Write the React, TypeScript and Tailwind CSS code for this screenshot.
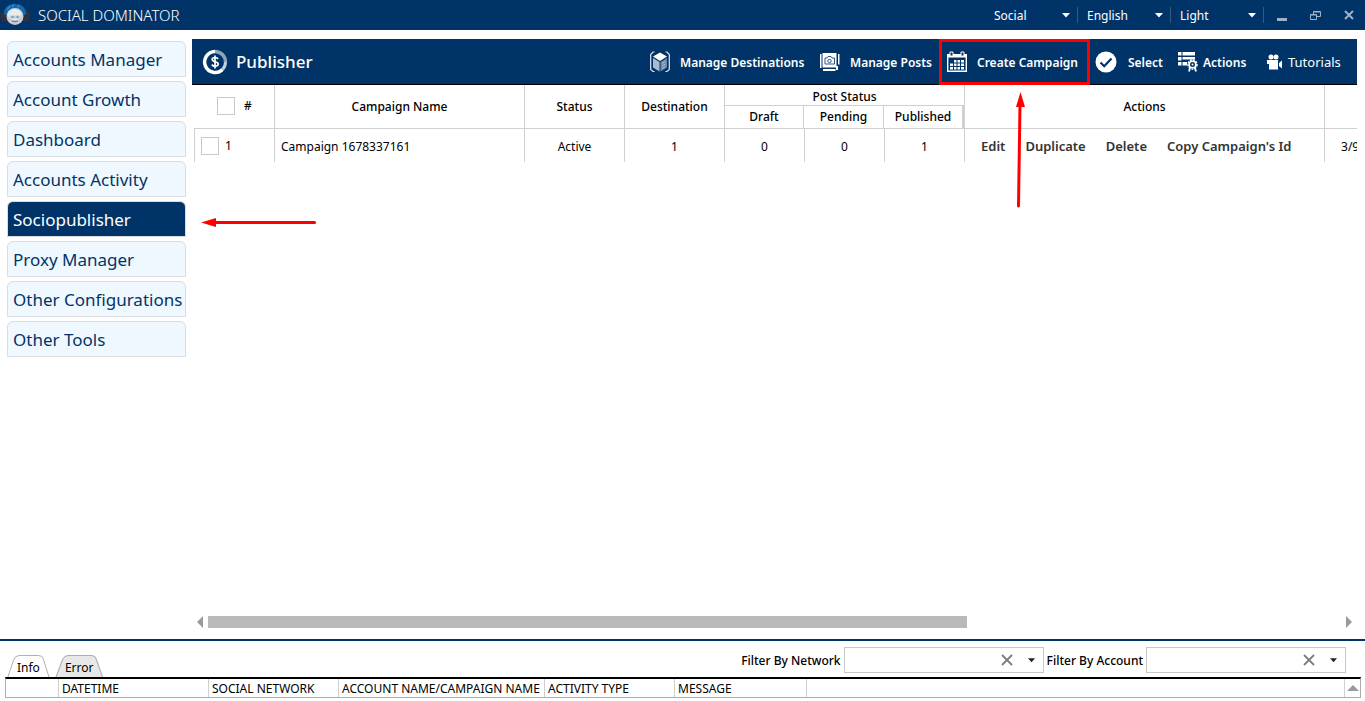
import { useState } from 'react';
import type { ReactNode } from 'react';
import clsx from 'clsx';

const MENU = [
  'Accounts Manager',
  'Account Growth',
  'Dashboard',
  'Accounts Activity',
  'Sociopublisher',
  'Proxy Manager',
  'Other Configurations',
  'Other Tools',
];

const ROW_ACTIONS = ['Edit', 'Duplicate', 'Delete', "Copy Campaign's Id"];

const CAMPAIGNS = [
  { id: 1, name: 'Campaign 1678337161', status: 'Active', destination: 1, draft: 0, pending: 0, published: 1, created: '3/9' },
];

const LOG_COLUMNS = [
  { label: '', width: 'w-[53px]' },
  { label: 'DATETIME', width: 'w-[150px]' },
  { label: 'SOCIAL NETWORK', width: 'w-[130px]' },
  { label: 'ACCOUNT NAME/CAMPAIGN NAME', width: 'w-[206px]' },
  { label: 'ACTIVITY TYPE', width: 'w-[130px]' },
  { label: 'MESSAGE', width: 'w-[132px]' },
];

function Logo() {
  return (
    <svg width="30" height="24" viewBox="0 0 30 24" aria-hidden="true">
      <ellipse cx="4" cy="13" rx="4" ry="6" fill="#2c3140" />
      <ellipse cx="26" cy="13" rx="4" ry="6" fill="#2c3140" />
      <path d="M4 11C4 4 9 1 15 1s11 3 11 10l-3 2H7z" fill="#1268b3" />
      <path d="M7 7l3-4M12 4l2-3M18 4l1-2" stroke="#3f9be0" strokeWidth="1" />
      <circle cx="15" cy="13.500" r="8.500" fill="#c9cbd2" />
      <ellipse cx="14.500" cy="11.500" rx="7" ry="5.500" fill="#e9eaee" />
      <path d="M9.500 12.500h11v3h-11z" fill="#c3d0de" />
      <circle cx="12.500" cy="14" r="1.200" fill="#7f9fbd" />
      <circle cx="17.500" cy="14" r="1.200" fill="#7f9fbd" />
      <path d="M12 18q3 1.500 6 0" stroke="#6f727d" fill="none" />
    </svg>
  );
}

function DollarIcon() {
  return (
    <svg width="26" height="26" viewBox="0 0 26 26" fill="none" aria-hidden="true">
      <path d="M13 2.500a10.500 10.500 0 1 0 7.500 18" stroke="#fff" strokeWidth="3.500" />
      <path d="M13 2.500a10.500 10.500 0 0 1 10.500 10.500" stroke="#8fa5bf" strokeWidth="3.500" />
      <path d="M23.500 13a10.500 10.500 0 0 1-3 7.500" stroke="#c3cfdc" strokeWidth="3" />
      <path d="M16 10c-.5-1-1.600-1.500-2.900-1.500-1.700 0-2.900.8-2.900 2 0 3 6 1.500 6 4.500 0 1.400-1.300 2.200-3.100 2.200-1.500 0-2.600-.5-3.200-1.700M13 6.500v13" stroke="#fff" strokeWidth="1.700" />
    </svg>
  );
}

function BoxIcon() {
  return (
    <svg width="20" height="22" viewBox="0 0 20 22" fill="none" aria-hidden="true">
      <path d="M10 1.500l7 4-7 4.500-7-4.500z" fill="#fff" />
      <path d="M3 7l6.500 4v9.500L3 16.500z" fill="#a9bbcf" />
      <path d="M17 7l-6.500 4v9.500l6.500-4z" fill="#6a87a8" />
      <path d="M12 12.500l3.500-2M12 15l3.500-2M12 17.500l3.500-2" stroke="#c9d4e0" strokeWidth=".8" />
      <path d="M4.500 1H3L.7 3.500v15L3 20.500h1.500M15.500 1H17l2.300 2.500v15L17 20.500h-1.500" stroke="#dfe6ee" strokeWidth="1.200" />
    </svg>
  );
}

function PostsIcon() {
  return (
    <svg width="20" height="20" viewBox="0 0 20 20" fill="none" aria-hidden="true">
      <path d="M0 2h1.500v14H0zM18 2h1.500v10.500H18zM3 17h12.500v2H3zM16 14h2v4h-2z" fill="#fff" />
      <path d="M2.500 1h14v14.500h-14z" fill="#fff" />
      <path d="M5 6h2l1-1.500h3l1 1.500h2.500v6H5z" stroke="#2f5680" strokeWidth="1" />
      <circle cx="9.500" cy="9" r="1.700" stroke="#2f5680" strokeWidth="1" />
    </svg>
  );
}

function CalendarIcon() {
  return (
    <svg width="20" height="21" viewBox="0 0 20 21" fill="none" aria-hidden="true">
      <path d="M.7 3.700h18.600v16.600H.7z" stroke="#fff" strokeWidth="1.400" />
      <path d="M1 3.500h18v3H1z" fill="#fff" />
      <path d="M3 1h3v4H3zM14 1h3v4h-3z" fill="#003468" stroke="#fff" strokeWidth="1" />
      <path
        d="M7 9h2.500v2.500H7zM10.500 9H13v2.500h-2.500zM14 9h3v2.500h-3zM3 12.500h3V15H3zM7 12.500h2.500V15H7zM10.500 12.500H13V15h-2.500zM14 12.500h3V15h-3zM3 16h3v2.500H3zM7 16h2.500v2.500H7zM10.500 16H13v2.500h-2.500zM14 16h3v2.500h-3z"
        fill="#fff"
      />
    </svg>
  );
}

function CheckIcon() {
  return (
    <svg width="22" height="22" viewBox="0 0 22 22" fill="none" aria-hidden="true">
      <circle cx="11" cy="11" r="10.500" fill="#fff" />
      <path d="M5.500 11.500l3.700 3.700 7.300-7.600" stroke="#003468" strokeWidth="2.200" />
    </svg>
  );
}

function ActionsIcon() {
  return (
    <svg width="20" height="21" viewBox="0 0 20 21" fill="none" aria-hidden="true">
      <path d="M0 1h3.500v3.500H0zM4.500 1H17v3.500H4.500zM0 6h3.500v3.500H0zM4.500 6H17v2.500H4.500zM0 11h3.500v3.500H0zM4.500 11H9v3.500H4.500z" fill="#fff" />
      <circle cx="14.500" cy="13.500" r="4.500" stroke="#fff" strokeWidth="1.500" strokeDasharray="2 1" />
      <circle cx="14.500" cy="13.500" r="3.300" stroke="#fff" strokeWidth="1.600" />
      <circle cx="14.500" cy="13.500" r="1" fill="#fff" />
      <path d="M12 17l-1 3.500M17 17l1 3.500" stroke="#fff" strokeWidth="1.800" />
    </svg>
  );
}

function CameraIcon() {
  return (
    <svg width="16" height="16" viewBox="0 0 16 16" fill="#fff" aria-hidden="true">
      <circle cx="4" cy="3" r="2.500" />
      <circle cx="9" cy="3" r="2.500" />
      <path d="M0 6h11v9.500H2V10H0zM12 9l3-2.500v8L12 12z" />
    </svg>
  );
}

function Caret({ className }: { className: string }) {
  return (
    <svg width="8" height="5" viewBox="0 0 8 5" className={clsx('pointer-events-none absolute', className)} aria-hidden="true">
      <path d="M0 0h8L4 4.500z" fill="currentColor" />
    </svg>
  );
}

function TopSelect({ label, value }: { label: string; value: string }) {
  return (
    <div className="relative flex h-4 w-[93px] items-center border-r border-[#33597f] text-white">
      <select aria-label={label} className="w-full appearance-none bg-transparent pt-0.5 pl-[9px] text-xs outline-none">
        <option>{value}</option>
      </select>
      <Caret className="right-[7px]" />
    </div>
  );
}

function ToolButton({ icon, label, className, children }: { icon: ReactNode; label: string; className: string; children?: ReactNode }) {
  return (
    <button className={clsx('flex h-full shrink-0 items-center whitespace-nowrap text-white', className)}>
      {icon}
      <span className="pt-0.5">{label}</span>
      {children}
    </button>
  );
}

function FilterBox({ id, label }: { id: string; label: string }) {
  return (
    <div className="flex items-center gap-[3px]">
      <label htmlFor={id} className="pt-0.5 text-xs font-medium whitespace-nowrap">{label}</label>
      <div className="relative flex h-[26px] w-[200px] items-center border border-[#c9c9c9]">
        <select id={id} className="h-full w-full appearance-none bg-transparent outline-none">
          <option></option>
        </select>
        <button aria-label={`Clear ${label}`} className="absolute right-[30px] text-[#7d7d7d]">
          <svg width="12" height="12" viewBox="0 0 12 12" stroke="currentColor" strokeWidth="1.800">
            <path d="M1 1l10 10M11 1L1 11" />
          </svg>
        </button>
        <Caret className="right-2 w-[7px] text-[#222]" />
      </div>
    </div>
  );
}

const TH = 'border-[#d0d0d0] p-0 text-center text-xs font-medium';
const TD = 'border-l border-[#d0d0d0] px-0 pt-0.5 pb-0 text-center text-xs';
const CHECKBOX = 'h-[18px] w-[18px] shrink-0 appearance-none border border-[#c8c8c8] bg-white checked:bg-[#003468]';

export default function App() {
  const [active, setActive] = useState('Sociopublisher');
  const [tab, setTab] = useState('Info');

  return (
    <div className="flex h-screen flex-col overflow-hidden bg-white font-['Noto_Sans','Open_Sans',sans-serif] text-black">
      {/* Title bar */}
      <header className="flex h-[30px] shrink-0 items-center bg-[#003468] text-white">
        <Logo />
        <h1 className="ml-2 text-[15px] font-light">SOCIAL DOMINATOR</h1>
        <div className="ml-auto flex items-center">
          <TopSelect label="Network" value="Social" />
          <TopSelect label="Language" value="English" />
          <TopSelect label="Theme" value="Light" />
          <div className="flex items-center gap-[23px] pr-[11px] pl-[13px] text-[#9db1c8]">
            <button aria-label="Minimize" className="flex h-3 w-[10px] items-end">
              <span className="block h-[3px] w-full bg-current" />
            </button>
            <button aria-label="Restore">
              <svg width="11" height="11" viewBox="0 0 11 11" fill="none" stroke="currentColor">
                <path d="M.5 4.500h6v5h-6zM3.500 4V1.500h7v5H7M3.500 2h7M.5 5h6" />
              </svg>
            </button>
            <button aria-label="Close">
              <svg width="10" height="10" viewBox="0 0 10 10" stroke="currentColor" strokeWidth="2">
                <path d="M1 1l8 8M9 1L1 9" />
              </svg>
            </button>
          </div>
        </div>
      </header>

      <div className="flex min-h-0 flex-1">
        {/* Sidebar */}
        <nav className="flex w-[192px] shrink-0 flex-col gap-1 pt-[11px] pr-[6px] pl-[7px]">
          {MENU.map(item => (
            <button
              key={item}
              onClick={() => setActive(item)}
              className={clsx(
                'relative h-9 rounded-t-md border border-[#d9dde1] pt-0.5 pl-[5px] text-left text-[17px] whitespace-nowrap',
                item === active ? 'bg-[#003468] text-white' : 'bg-[#f0f8ff] text-[#003468]',
              )}
            >
              {item}
              {item === 'Sociopublisher' && (
                <svg width="116" height="10" viewBox="0 0 116 10" className="absolute top-[15px] left-[193px]" aria-hidden="true">
                  <path d="M14 5.500h99.500" stroke="#f00" strokeWidth="3" strokeLinecap="round" />
                  <path d="M0 5.500L15 1v9z" fill="#f00" />
                </svg>
              )}
            </button>
          ))}
        </nav>

        {/* Publisher */}
        <main className="flex min-w-0 flex-1 flex-col pt-[9px] pr-2">
          <div className="flex h-[46px] shrink-0 items-center border-b border-black bg-[#003468] pl-[10px] text-white">
            <DollarIcon />
            <h2 className="ml-2 text-[17px] font-medium">Publisher</h2>
            <div className="ml-auto flex h-full items-center">
              <ToolButton icon={<BoxIcon />} label="Manage Destinations" className="w-[170px] gap-[10px] text-xs font-semibold" />
              <ToolButton icon={<PostsIcon />} label="Manage Posts" className="w-[119px] gap-[10px] text-xs font-semibold" />
              <ToolButton icon={<CalendarIcon />} label="Create Campaign" className="relative w-[151px] gap-[10px] pl-2 text-xs font-semibold">
                <span className="absolute inset-x-0 top-0 -bottom-px border-3 border-[#f00]" />
                <svg width="12" height="118" viewBox="0 0 12 118" className="absolute top-[53px] left-[75px] z-10" aria-hidden="true">
                  <path d="M6 12L4.500 114" stroke="#f00" strokeWidth="3" strokeLinecap="round" />
                  <path d="M6.500 0L11 15H2z" fill="#f00" />
                </svg>
              </ToolButton>
              <ToolButton icon={<CheckIcon />} label="Select" className="w-[88px] gap-[11px] pl-[5px] text-xs font-semibold" />
              <ToolButton icon={<ActionsIcon />} label="Actions" className="w-[89px] gap-[5px] text-xs font-semibold" />
              <ToolButton icon={<CameraIcon />} label="Tutorials" className="w-[90px] gap-[5px] text-[13px]" />
            </div>
          </div>

          <div className="min-h-0 flex-1 overflow-hidden pl-[2px]">
            <table className="w-[1260px] table-fixed border-separate border-spacing-0">
              <colgroup>
                <col className="w-[80px]" />
                <col className="w-[250px]" />
                <col className="w-[100px]" />
                <col className="w-[100px]" />
                <col className="w-[80px]" />
                <col className="w-[80px]" />
                <col className="w-[80px]" />
                <col className="w-[360px]" />
                <col />
              </colgroup>
              <thead>
                <tr className="h-[21px]">
                  <th rowSpan={2} className={clsx(TH, 'border-b')}>
                    <label className="flex items-center gap-[9px] pb-0.5 pl-[23px]">
                      <input type="checkbox" aria-label="Select all campaigns" className={CHECKBOX} />
                      <span>#</span>
                    </label>
                  </th>
                  <th rowSpan={2} className={clsx(TH, 'border-b border-l')}>Campaign Name</th>
                  <th rowSpan={2} className={clsx(TH, 'border-b border-l')}>Status</th>
                  <th rowSpan={2} className={clsx(TH, 'border-b border-l')}>Destination</th>
                  <th colSpan={3} className={clsx(TH, 'border-b border-l pt-1 leading-4')}>Post Status</th>
                  <th rowSpan={2} className={clsx(TH, 'border-b border-l')}>Actions</th>
                  <th rowSpan={2} className={clsx(TH, 'border-b border-l')}></th>
                </tr>
                <tr className="h-[23px]">
                  <th className={clsx(TH, 'border-r border-b border-l')}>Draft</th>
                  <th className={clsx(TH, 'border-r border-b')}>Pending</th>
                  <th className={clsx(TH, 'border-r-2 border-b')}>Published</th>
                </tr>
              </thead>
              <tbody>
                {CAMPAIGNS.map(c => (
                  <tr key={c.id} className="h-[33px]">
                    <td className={TD}>
                      <label className="flex items-center gap-[6px] pb-0.5 pl-[6px]">
                        <input type="checkbox" aria-label={`Select ${c.name}`} className={CHECKBOX} />
                        <span>{c.id}</span>
                      </label>
                    </td>
                    <td className={TD}>
                      <div className="pl-[6px] text-left">{c.name}</div>
                    </td>
                    <td className={TD}>{c.status}</td>
                    <td className={TD}>{c.destination}</td>
                    <td className={TD}>{c.draft}</td>
                    <td className={TD}>{c.pending}</td>
                    <td className={TD}>{c.published}</td>
                    <td className={TD}>
                      <div className="flex gap-5 pl-4 text-[13px] font-semibold whitespace-nowrap text-[#333]">
                        {ROW_ACTIONS.map(a => (
                          <button key={a}>{a}</button>
                        ))}
                      </div>
                    </td>
                    <td className={TD}>
                      <div className="pl-4 text-left">{c.created}</div>
                    </td>
                  </tr>
                ))}
              </tbody>
            </table>
          </div>

          {/* Horizontal scrollbar */}
          <div className="mb-[11px] flex h-3 shrink-0 items-center gap-[5px] px-[5px] text-[#9a9a9a]">
            <svg width="6" height="12" viewBox="0 0 6 12" fill="currentColor" aria-hidden="true">
              <path d="M6 0v12L0 6z" />
            </svg>
            <div className="h-3 flex-1">
              <div className="h-full w-[67%] bg-[#b9b9b9]" />
            </div>
            <svg width="6" height="12" viewBox="0 0 6 12" fill="currentColor" aria-hidden="true">
              <path d="M0 0v12l6-6z" />
            </svg>
          </div>
        </main>
      </div>

      {/* Log panel */}
      <section className="shrink-0 border-t-2 border-[#003468] pr-1 pb-[3px] pl-[5px]">
        <div className="flex h-9 items-end justify-between">
          <div role="tablist" className="flex items-end gap-[5px] pl-0.5">
            {['Info', 'Error'].map(name => (
              <button key={name} role="tab" aria-selected={tab === name} onClick={() => setTab(name)} className="relative flex h-[22px] items-center justify-center px-[10px] pt-1 text-xs">
                <svg viewBox="0 0 46 22" preserveAspectRatio="none" className="absolute inset-0 h-full w-full" aria-hidden="true">
                  <path d="M1 22L7 5Q9 .5 13 .5h21q4 0 5 3.500l6 18" fill={tab === name ? '#fff' : '#e6e9e8'} stroke="#adadad" />
                </svg>
                <span className="relative">{name}</span>
              </button>
            ))}
          </div>
          <div className="flex gap-[3px] self-center pt-[2px] pr-[15px]">
            <FilterBox id="filter-network" label="Filter By Network" />
            <FilterBox id="filter-account" label="Filter By Account" />
          </div>
        </div>
        <div className="flex border border-t-2 border-[#adadad] border-t-black">
          <table className="table-fixed border-separate border-spacing-0">
            <thead>
              <tr className="h-[18px]">
                {LOG_COLUMNS.map(col => (
                  <th key={col.label} className={clsx('border-r border-[#d0d0d0] px-0 pt-0.5 pb-0 pl-[3px] text-left text-xs font-normal whitespace-nowrap', col.width)}>
                    {col.label}
                  </th>
                ))}
              </tr>
            </thead>
          </table>
          <button aria-label="Scroll up" className="ml-auto flex w-4 items-center justify-center border-l border-[#d0d0d0] text-[#9a9a9a]">
            <svg width="12" height="6" viewBox="0 0 12 6" fill="currentColor">
              <path d="M0 6h12L6 0z" />
            </svg>
          </button>
        </div>
      </section>
    </div>
  );
}
